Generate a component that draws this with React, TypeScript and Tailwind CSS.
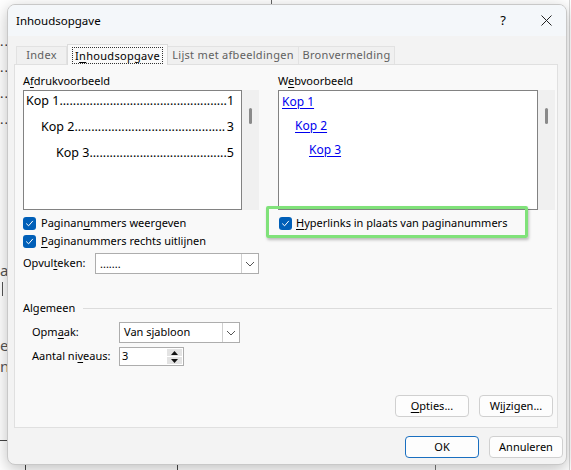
import React from "react";

const font = { fontFamily: '"Noto Sans", "Open Sans", "Liberation Sans", sans-serif' };

function Check() {
  return (
    <span className="flex h-[13px] w-[13px] shrink-0 items-center justify-center rounded-[3px] bg-[#005fb8]">
      <svg width="9" height="9" viewBox="0 0 9 9" fill="none">
        <path d="M1.5 4.8 L3.6 6.8 L7.6 2.2" stroke="white" strokeWidth="1" strokeLinecap="round" strokeLinejoin="round" />
      </svg>
    </span>
  );
}

function Chevron() {
  return (
    <svg width="10" height="6" viewBox="0 0 10 6" fill="none">
      <path d="M1 1 L5 5 L9 1" stroke="#555" strokeWidth="1" />
    </svg>
  );
}

function U({ children }: { children: React.ReactNode }) {
  return <span className="underline underline-offset-2">{children}</span>;
}

function Scroll({ h }: { h: string }) {
  return (
    <div className={`relative w-[17px] bg-[#f0f0f0] ${h}`}>
      <div className="absolute left-[7px] top-[18px] h-[16px] w-[3px] rounded-full bg-[#8a8a8a]" />
    </div>
  );
}

function Leader({ label, num, dots, indent }: { label: string; num: string; dots: number; indent: string }) {
  return (
    <div className={`flex h-[26px] items-center justify-between whitespace-nowrap text-[12.5px] text-black ${indent}`}>
      <span>
        {label}
        {".".repeat(dots)}
      </span>
      <span>{num}</span>
    </div>
  );
}

function Btn({ children, w, primary }: { children: React.ReactNode; w: string; primary?: boolean }) {
  return (
    <div
      className={`flex h-[22px] items-center justify-center rounded-[4px] border bg-[#fdfdfd] text-[11px] text-black ${w} ${
        primary ? "border-[#1a6fc0]" : "border-[#d0d0d0]"
      }`}
    >
      {children}
    </div>
  );
}

export default function App() {
  return (
    <div className="relative h-[470px] w-[571px] overflow-hidden bg-white" style={font}>
      {/* document behind the dialog */}
      <div className="absolute left-0 top-[28px] text-[13px] leading-[26px] tracking-[1px] text-[#333]">
        <div>..</div>
        <div>..</div>
        <div>..</div>
        <div>..</div>
      </div>
      <div className="absolute left-0 top-[262px] h-[16px] w-[7px] overflow-hidden text-[15px] leading-[16px] text-[#555]">a</div>
      <div className="absolute left-[2px] top-[282px] h-[14px] w-[1px] bg-[#555]" />
      <div className="absolute left-0 top-[338px] h-[15px] w-[7px] overflow-hidden text-[15px] leading-[15px] text-[#555]">e</div>
      <div className="absolute left-0 top-[359px] h-[15px] w-[7px] overflow-hidden text-[15px] leading-[15px] text-[#555]">n</div>
      <div className="absolute left-0 top-[440px] h-[1px] w-[10px] bg-[#444]" />
      <div className="absolute left-[271px] top-0 h-[6px] w-[1px] bg-[#666]" />
      <div className="absolute left-[25px] top-[462px] h-[10px] w-[1px] bg-[#444]" />
      <div className="absolute left-[177px] top-[462px] h-[10px] w-[1px] bg-[#444]" />
      <div className="absolute left-[435px] top-[462px] h-[10px] w-[1px] bg-[#777]" />
      <div className="absolute left-[569px] top-0 h-[470px] w-[1px] bg-[#d8d8d8]" />

      {/* dialog */}
      <div className="absolute left-[7px] top-[4px] flex h-[461px] w-[560px] flex-col overflow-hidden rounded-[8px] border border-[#c8c8c8] bg-[#f3f3f3] shadow-[0_4px_16px_rgba(0,0,0,0.25)]">
        <div className="flex h-[31px] shrink-0 items-center bg-[#f4f7fa] pl-[8px] text-[11.5px] text-black">
          <span className="flex-1">Inhoudsopgave</span>
          <span className="w-[20px] text-center text-[13px]">?</span>
          <span className="ml-[26px] mr-[13px] flex w-[14px] justify-center">
            <svg width="11" height="11" viewBox="0 0 11 11" fill="none">
              <path d="M0.5 0.5 L10.5 10.5 M10.5 0.5 L0.5 10.5" stroke="#222" strokeWidth="1" />
            </svg>
          </span>
        </div>

        {/* tabs */}
        <div className="mt-[8px] flex h-[20px] items-end whitespace-nowrap pl-[8px] text-[11px]">
          <div className="flex h-[18px] w-[51px] items-center justify-center border border-b-0 border-[#e2e2e2] bg-[#f0f0f0] text-[#606060] tracking-[0.3px]">
            Index
          </div>
          <div className="relative z-10 -mb-[1px] flex h-[21px] w-[101px] items-center justify-center border border-b-0 border-[#dcdcdc] bg-[#f9f9f9] text-black">
            <span className="border border-dotted border-[#333] px-[2px] leading-[15px] tracking-[0.3px]">
              I<U>n</U>houdsopgave
            </span>
          </div>
          <div className="flex h-[18px] w-[131px] items-center justify-center border border-b-0 border-l-0 border-[#e2e2e2] bg-[#f0f0f0] text-[#606060] tracking-[0.3px]">
            Lijst met afbeeldingen
          </div>
          <div className="flex h-[18px] w-[96px] items-center justify-center border border-b-0 border-l-0 border-[#e2e2e2] bg-[#f0f0f0] text-[#606060] tracking-[0.3px]">
            Bronvermelding
          </div>
        </div>

        {/* panel */}
        <div className="relative ml-[6px] mr-[8px] flex h-[364px] flex-col border border-[#e0e0e0] bg-[#f9f9f9] pl-[8px] pr-[4px] pt-[9px] text-[11px] text-black">
          <div className="flex">
            {/* left column */}
            <div className="flex w-[236px] flex-col">
              <div className="h-[16px] leading-[14px]">
                A<U>f</U>drukvoorbeeld
              </div>
              <div className="flex">
                <div className="h-[120px] w-[219px] overflow-hidden border border-[#828282] bg-white pl-[2px] pr-[7px]">
                  <Leader label="Kop 1" num="1" dots={50} indent="-mt-[3px]" />
                  <Leader label="Kop 2" num="3" dots={45} indent="pl-[15px]" />
                  <Leader label="Kop 3" num="5" dots={41} indent="pl-[30px]" />
                </div>
                <Scroll h="h-[120px]" />
              </div>
              <div className="mt-[4px] flex h-[18px] items-center gap-[5px]">
                <Check />
                <span>
                  Paginan<U>u</U>mmers weergeven
                </span>
              </div>
              <div className="flex h-[18px] items-center gap-[5px]">
                <Check />
                <span>
                  <U>P</U>aginanummers rechts uitlijnen
                </span>
              </div>
              <div className="mt-[3px] flex h-[21px] items-center">
                <span className="w-[72px]">
                  Opvul<U>t</U>eken:
                </span>
                <div className="flex h-[21px] w-[164px] items-center border border-[#adadad] bg-white">
                  <span className="flex-1 pl-[4px] leading-[10px]">.......</span>
                  <span className="flex h-full w-[17px] items-center justify-center border-l border-[#cfcfcf]">
                    <Chevron />
                  </span>
                </div>
              </div>
            </div>

            {/* separator */}
            <div className="ml-[9px] mt-[2px] h-[222px] w-[1px] bg-[#cfcfcf]" />

            {/* right column */}
            <div className="ml-[10px] flex w-[277px] flex-col">
              <div className="h-[16px] leading-[14px]">
                W<U>e</U>bvoorbeeld
              </div>
              <div className="flex">
                <div className="h-[120px] w-[260px] border border-[#828282] bg-white pl-[3px] text-[12px] text-[#0000ee]">
                  <div className="-mt-[1px] flex h-[24px] items-center">
                    <span className="underline underline-offset-2">Kop 1</span>
                  </div>
                  <div className="flex h-[24px] items-center pl-[13px]">
                    <span className="underline underline-offset-2">Kop 2</span>
                  </div>
                  <div className="flex h-[24px] items-center pl-[27px]">
                    <span className="underline underline-offset-2">Kop 3</span>
                  </div>
                </div>
                <Scroll h="h-[120px]" />
              </div>
              <div className="relative mt-[4px] flex h-[18px] items-center gap-[4px] pl-[1px]">
                <Check />
                <span>
                  <U>H</U>yperlinks in plaats van paginanummers
                </span>
                <div className="absolute left-[-12px] top-[-8px] h-[32px] w-[262px] rounded-[2px] border-[3px] border-[#80e27a] shadow-[1px_2px_3px_rgba(0,0,0,0.25)]" />
              </div>
            </div>
          </div>

          {/* Algemeen */}
          <div className="mt-[2px] flex h-[16px] items-center">
            <span>Algemeen</span>
            <div className="ml-[8px] mr-[1px] h-[1px] flex-1 bg-[#dcdcdc]" />
          </div>
          <div className="mt-[6px] flex h-[21px] items-center pl-[9px]">
            <span className="w-[87px]">
              Opm<U>a</U>ak:
            </span>
            <div className="flex h-[21px] w-[121px] items-center border border-[#adadad] bg-white">
              <span className="flex-1 pl-[4px]">Van sjabloon</span>
              <span className="flex h-full w-[17px] items-center justify-center border-l border-[#cfcfcf]">
                <Chevron />
              </span>
            </div>
          </div>
          <div className="mt-[4px] flex h-[19px] items-center pl-[9px]">
            <span className="w-[87px]">
              Aantal ni<U>v</U>eaus:
            </span>
            <div className="flex h-[19px] w-[65px] items-center border border-[#adadad] bg-white">
              <span className="flex-1 pl-[2px]">3</span>
              <div className="mr-[1px] flex h-[15px] w-[15px] flex-col gap-[1px]">
                <div className="flex h-[7px] items-center justify-center bg-[#e3e3e3]">
                  <svg width="7" height="4" viewBox="0 0 7 4">
                    <path d="M0 4 L3.5 0 L7 4 Z" fill="#111" />
                  </svg>
                </div>
                <div className="flex h-[7px] items-center justify-center bg-[#e3e3e3]">
                  <svg width="7" height="4" viewBox="0 0 7 4">
                    <path d="M0 0 L3.5 4 L7 0 Z" fill="#111" />
                  </svg>
                </div>
              </div>
            </div>
          </div>

          <div className="mt-auto mb-[10px] flex justify-end gap-[10px]">
            <Btn w="w-[74px]">
              <U>O</U>pties...
            </Btn>
            <Btn w="w-[74px]">
              W<U>i</U>jzigen...
            </Btn>
          </div>
        </div>

        {/* footer */}
        <div className="mt-[8px] flex justify-end gap-[10px] pr-[3px]">
          <Btn w="w-[74px]" primary>
            OK
          </Btn>
          <Btn w="w-[74px]">Annuleren</Btn>
        </div>
      </div>
    </div>
  );
}
